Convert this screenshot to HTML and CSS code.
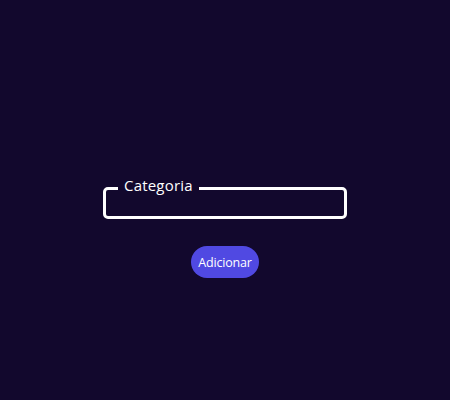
FILE: index.html
```html
<!DOCTYPE html>
<html lang="pt">
<head>
<meta charset="utf-8">
<link rel="stylesheet" href="styles.css">
</head>
<body>
<main class="page">
  <form class="form">
    <fieldset class="field">
      <legend class="field-label">Categoria</legend>
      <input class="field-input" type="text">
    </fieldset>
    <button class="btn" type="button">Adicionar</button>
  </form>
</main>
</body>
</html>
```
FILE: styles.css
```css
html, body {
  margin: 0;
  padding: 0;
  background: #12082d;
}
.page {
  width: 450px;
  height: 400px;
  display: flex;
  justify-content: center;
  font-family: "Open Sans", "Lato", sans-serif;
}
.form {
  margin-top: 176px;
  display: flex;
  flex-direction: column;
  align-items: center;
}
.field {
  box-sizing: border-box;
  width: 244px;
  height: 43px;
  margin: 0;
  padding: 0 8px;
  border: 3px solid #ffffff;
  border-radius: 5px;
}
.field-label {
  color: #ffffff;
  font-size: 15px;
  line-height: 18px;
  padding: 0 6px 7px;
  margin-left: 4px;
  letter-spacing: 0.2px;
}
.field-input {
  width: 100%;
  background: transparent;
  border: none;
  outline: none;
  color: #fff;
  height: 18px;
  padding: 0;
}
.btn {
  margin-top: 27px;
  height: 32px;
  width: 68px;
  padding: 0;
  border: none;
  border-radius: 16px;
  background: #5049e2;
  color: #ffffff;
  font-family: inherit;
  font-size: 12.5px;
  letter-spacing: -0.2px;
}
```
